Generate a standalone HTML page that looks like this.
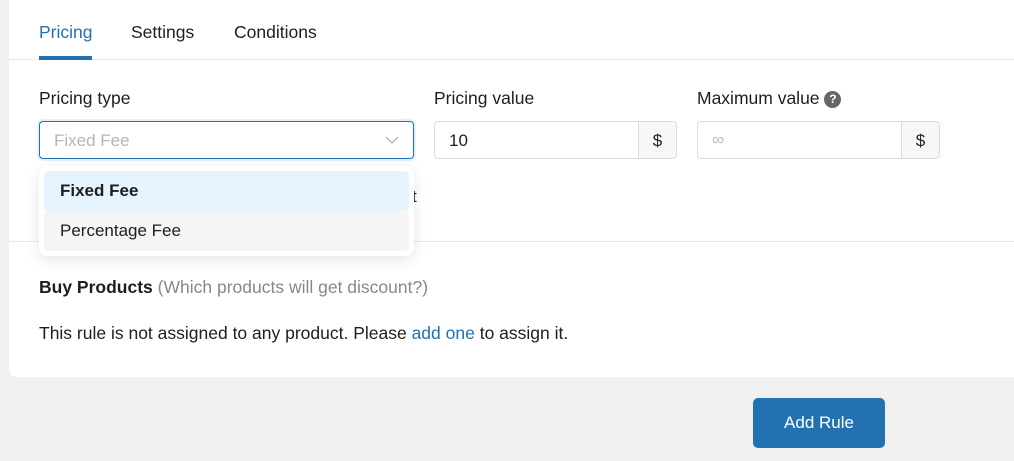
<!DOCTYPE html>
<html><head><meta charset="utf-8"><style>
*{box-sizing:border-box;margin:0;padding:0}
body{width:1014px;height:461px;background:#f0f0f0;font-family:"Liberation Sans",sans-serif;color:#1e1e1e;position:relative;overflow:hidden;font-size:17px}
.card{position:absolute;left:9px;top:0;width:1010px;height:377px;background:#fff;border-radius:0 0 0 8px}
.a{position:absolute;white-space:nowrap}
.tab{top:22px;font-size:17.5px}
.inp{position:absolute;border:1px solid #dcdcde;border-radius:4px;height:38px;background:#fff}
.add{position:absolute;right:0;top:0;width:38px;height:36px;border-left:1px solid #dcdcde;background:#f6f7f7;text-align:center;line-height:37px;font-size:17px;border-radius:0 4px 4px 0}
</style></head><body>
<div class="card"></div>
<div class="a tab" style="left:39px;color:#2271b1">Pricing</div>
<div class="a tab" style="left:131px">Settings</div>
<div class="a tab" style="left:234px">Conditions</div>
<div class="a" style="left:9px;top:59px;width:1005px;height:1px;background:#e8e8e8"></div>
<div class="a" style="left:39px;top:56px;width:53px;height:4px;background:#2271b1"></div>

<div class="a" style="left:39px;top:88px;font-size:17.5px">Pricing type</div>
<div class="a" style="left:434px;top:88px;font-size:17.5px">Pricing value</div>
<div class="a" style="left:697px;top:88px;font-size:17.5px">Maximum value <span style="display:inline-block;width:17px;height:17px;border-radius:50%;background:#666;color:#fff;font-size:12px;font-weight:bold;text-align:center;line-height:17px;vertical-align:1px">?</span></div>

<div class="inp" style="left:39px;top:121px;width:375px;border-color:#2271b1;box-shadow:0 0 0 2px #e3f0fb"><span class="a" style="left:14px;top:9px;color:#b5b5b5">Fixed Fee</span>
<svg class="a" style="left:345px;top:13px" width="14" height="10"><path d="M1 2l6 6 6-6" fill="none" stroke="#aaa" stroke-width="1.2"/></svg></div>
<div class="inp" style="left:434px;top:121px;width:243px"><span class="a" style="left:14px;top:9px">10</span><div class="add">$</div></div>
<div class="inp" style="left:697px;top:121px;width:243px"><span class="a" style="left:14px;top:8px;color:#bbb">∞</span><div class="add">$</div></div>

<div class="a" style="left:412px;top:187px">t</div>
<div class="a" style="left:9px;top:241px;width:1005px;height:1px;background:#e8e8e8"></div>

<div class="a" style="left:39px;top:166px;width:375px;height:90px;background:#fff;border-radius:8px;box-shadow:0 4px 14px rgba(0,0,0,.1)">
<div class="a" style="left:5px;top:5px;width:365px;height:40px;background:#e6f4ff;border-radius:4px;padding:10px 16px;font-weight:bold">Fixed Fee</div>
<div class="a" style="left:5px;top:45px;width:365px;height:40px;background:#f5f5f5;border-radius:4px;padding:10px 16px">Percentage Fee</div>
</div>

<div class="a" style="left:39px;top:277px;font-size:17.5px"><b>Buy Products</b> <span style="color:#888">(Which products will get discount?)</span></div>
<div class="a" style="left:39px;top:323px;font-size:17.5px">This rule is not assigned to any product. Please <span style="color:#2271b1">add one</span> to assign it.</div>

<div class="a" style="left:753px;top:398px;width:132px;height:50px;background:#2271b1;border-radius:5px;color:#fff;text-align:center;line-height:50px">Add Rule</div>
</body></html>
